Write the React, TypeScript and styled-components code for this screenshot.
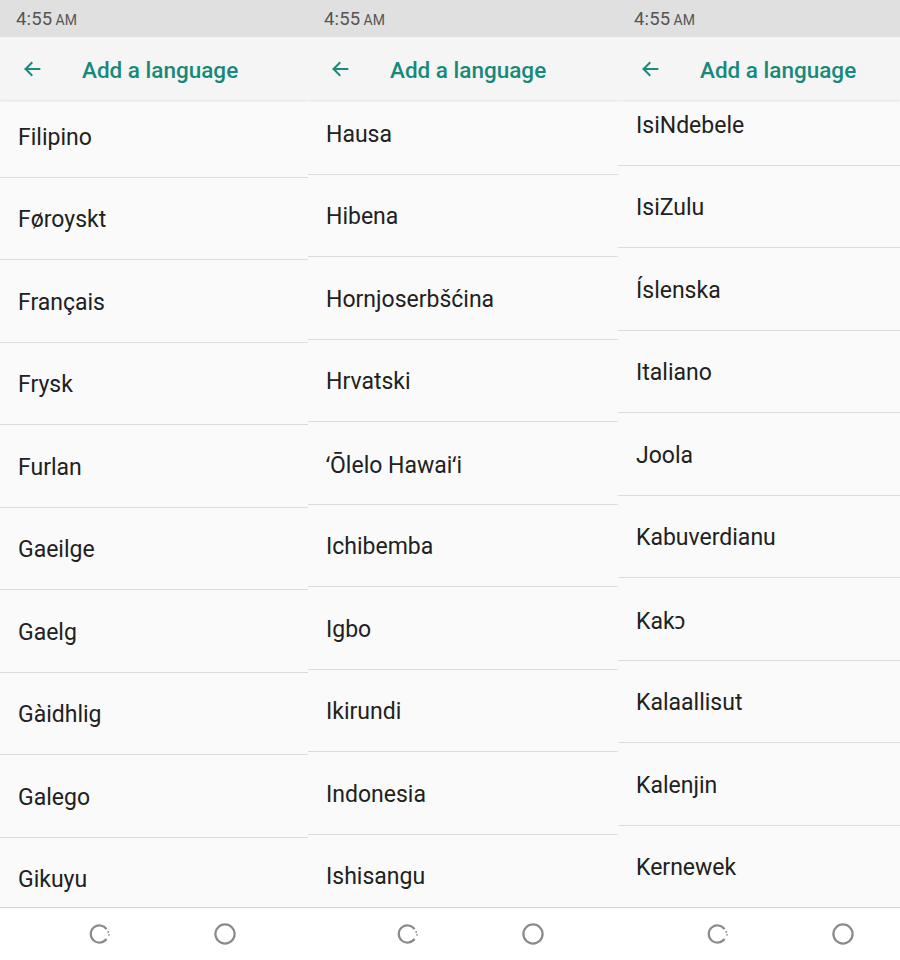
import React from 'react'
import styled, { createGlobalStyle } from 'styled-components'

const GlobalStyle = createGlobalStyle`
  html, body {
    margin: 0;
    padding: 0;
    background: #fafafa;
  }
  body {
    font-family: Roboto, 'Noto Sans', 'DejaVu Sans', sans-serif;
  }
`

type Screen = {
  width: number
  offset: number
  items: string[]
}

const screens: Screen[] = [
  {
    width: 308,
    offset: -5,
    items: ['Filipino', 'Føroyskt', 'Français', 'Frysk', 'Furlan', 'Gaeilge', 'Gaelg', 'Gàidhlig', 'Galego', 'Gikuyu'],
  },
  {
    width: 310,
    offset: -8,
    items: ['Hausa', 'Hibena', 'Hornjoserbšćina', 'Hrvatski', 'ʻŌlelo Hawaiʻi', 'Ichibemba', 'Igbo', 'Ikirundi', 'Indonesia', 'Ishisangu'],
  },
  {
    width: 282,
    offset: -17,
    items: ['IsiNdebele', 'IsiZulu', 'Íslenska', 'Italiano', 'Joola', 'Kabuverdianu', 'Kakɔ', 'Kalaallisut', 'Kalenjin', 'Kernewek'],
  },
]

function BackArrow() {
  return (
    <svg width="22" height="22" viewBox="0 0 24 24" fill="none">
      <path d="M20 12H5M11.5 5.5L5 12l6.5 6.5" stroke="#1b8a7b" strokeWidth="2.2" strokeLinecap="square" />
    </svg>
  )
}

function RecentIcon() {
  return (
    <svg width="24" height="24" viewBox="0 0 24 24" fill="none">
      <path d="M18.5 7.2A8.6 8.6 0 1 0 18.5 16.8" stroke="#8a8a8a" strokeWidth="2.2" fill="none" />
      <circle cx="20.2" cy="10" r="0.9" fill="#8a8a8a" />
      <circle cx="21" cy="12.8" r="0.9" fill="#8a8a8a" />
    </svg>
  )
}

function HomeIcon() {
  return (
    <svg width="24" height="24" viewBox="0 0 24 24" fill="none">
      <circle cx="12" cy="12" r="9.6" stroke="#8a8a8a" strokeWidth="2.2" />
    </svg>
  )
}

function App() {
  return (
    <>
      <GlobalStyle />
      <Page>
        {screens.map((s, i) => (
          <Phone key={i} $width={s.width}>
            <StatusBar>
              <Clock>
                4:55<Meridiem>AM</Meridiem>
              </Clock>
            </StatusBar>
            <Toolbar>
              <BackButton>
                <BackArrow />
              </BackButton>
              <Title>Add a language</Title>
            </Toolbar>
            <ListViewport>
              <LanguageList $offset={s.offset}>
                {s.items.map((name) => (
                  <LanguageRow key={name}>{name}</LanguageRow>
                ))}
              </LanguageList>
            </ListViewport>
            <NavBar>
              <NavButton>
                <RecentIcon />
              </NavButton>
              <NavButton>
                <HomeIcon />
              </NavButton>
            </NavBar>
          </Phone>
        ))}
      </Page>
    </>
  )
}

export default App

const Page = styled.div`
  display: flex;
  width: 900px;
  height: 960px;
  overflow: hidden;
`

const Phone = styled.div<{ $width: number }>`
  width: ${(p) => p.$width}px;
  flex-shrink: 0;
  height: 960px;
  display: flex;
  flex-direction: column;
  background: #fafafa;
  overflow: hidden;
`

const StatusBar = styled.div`
  height: 37px;
  flex-shrink: 0;
  background: #e0e0e0;
  display: flex;
  align-items: center;
  padding-left: 16px;
`

const Clock = styled.div`
  font-size: 18.5px;
  color: #555;
  letter-spacing: 0.2px;
  padding-top: 1px;
`

const Meridiem = styled.span`
  font-size: 14px;
  margin-left: 3px;
`

const Toolbar = styled.div`
  height: 63px;
  flex-shrink: 0;
  background: #f5f5f5;
  display: flex;
  align-items: center;
  position: relative;
  z-index: 1;
  box-shadow: 0 1px 2px rgba(0, 0, 0, 0.1);
`

const BackButton = styled.div`
  width: 22px;
  height: 22px;
  margin-left: 21px;
  margin-right: 39px;
  display: flex;
`

const Title = styled.div`
  font-size: 22.5px;
  font-weight: 500;
  color: #17897a;
  padding-top: 2px;
`

const ListViewport = styled.div`
  flex: 1;
  overflow: hidden;
  background: #fafafa;
`

const LanguageList = styled.div<{ $offset: number }>`
  margin-top: ${(p) => p.$offset}px;
`

const LanguageRow = styled.div`
  height: 82.5px;
  box-sizing: border-box;
  border-bottom: 1px solid #dcdcdc;
  display: flex;
  align-items: center;
  padding-left: 18px;
  padding-top: 3px;
  font-size: 23px;
  color: #212121;
`

const NavBar = styled.div`
  height: 53px;
  flex-shrink: 0;
  box-sizing: border-box;
  background: #fff;
  border-top: 1px solid #d4d4d4;
  display: flex;
  align-items: center;
  padding-left: 88px;
  gap: 101px;
`

const NavButton = styled.div`
  width: 24px;
  height: 24px;
  display: flex;
`
